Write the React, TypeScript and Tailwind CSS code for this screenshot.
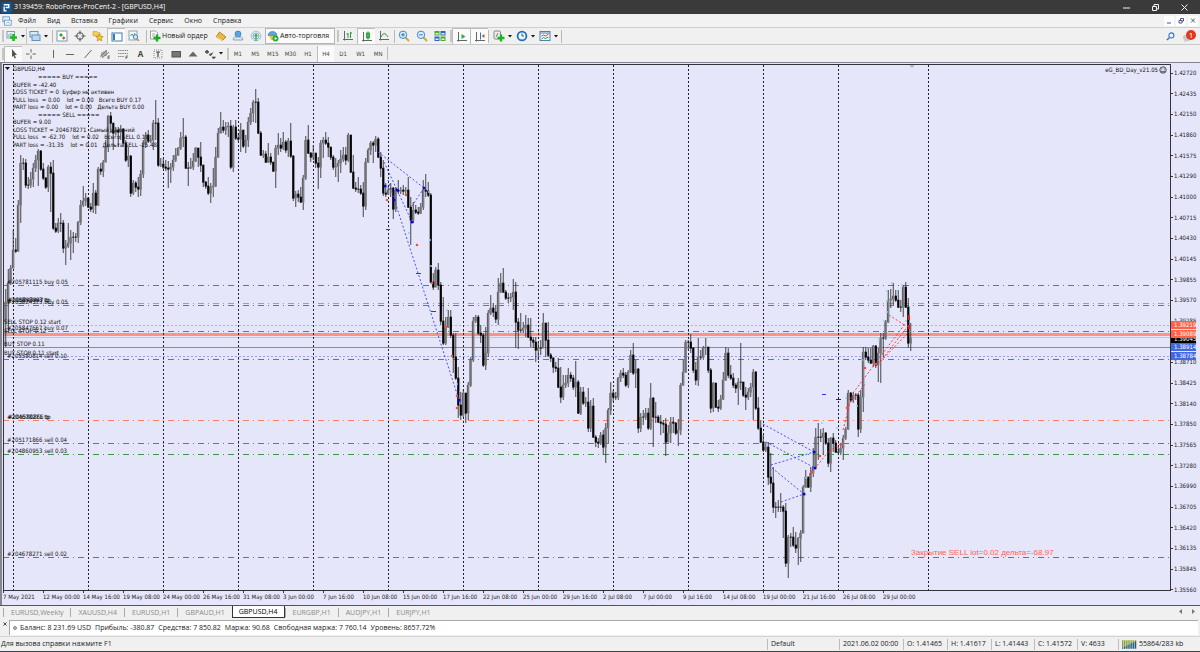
import type { ReactNode } from "react";
import clsx from "clsx";

const FIRST_X = 3;
const STEP = 2.5;

/* [close, high, low] for each H4 bar, in plot pixels */
const BARS = `322,318,345 302,289,347 283,269,330 268,265,285 250,230,267 251,238,253 205,200,252 163,155,223 163,158,170 185,159,188
185,177,189 179,172,188 168,163,187 160,155,172 151,149,186 169,150,171 178,163,180 187,177,189 167,165,192 173,162,212
228,160,230 231,223,233 223,218,233 223,213,232 248,220,253 246,240,265 243,223,248 237,230,260 237,232,253 237,233,242
222,221,243 205,200,225 201,186,207 198,193,206 207,197,208 209,203,212 193,183,213 205,190,214 169,167,206 171,163,175
162,160,177 147,140,162 116,115,152 123,112,133 133,130,150 130,127,135 132,127,147 129,125,140 143,128,147 160,140,162
156,147,167 193,155,197 183,180,195 187,181,192 189,177,197 174,170,196 143,140,178 135,132,148 141,130,143 140,135,143
123,120,150 123,100,140 165,118,167 164,158,167 167,158,169 168,160,171 169,161,188 167,163,183 160,155,171 155,148,162
148,147,156 138,132,150 137,118,147 168,135,169 168,162,186 167,158,169 161,153,170 148,147,162 157,148,167 165,142,172
182,165,187 186,181,189 193,177,195 187,183,203 186,168,197 157,147,187 133,128,158 127,112,133 130,120,133 127,122,135
126,122,137 167,120,169 127,125,172 138,120,140 139,133,142 130,123,152 146,130,148 140,135,153 122,117,147 113,108,125
102,100,122 102,89,123 133,98,134 155,131,156 154,150,158 162,151,163 157,143,163 162,153,165 171,163,172 148,145,188
145,133,155 148,138,152 142,132,150 150,140,153 141,138,157 156,123,158 198,155,201 194,191,207 197,190,202 202,187,203
178,175,210 140,136,180 153,125,154 157,152,162 153,145,160 163,153,168 167,157,189 143,140,178 140,137,158 143,132,145
147,137,157 157,147,160 167,155,170 166,158,177 163,160,182 159,150,173 155,147,162 160,147,165 135,133,162 172,135,173
188,155,189 189,182,192 189,177,193 193,185,195 206,182,217 162,158,210 150,148,163 143,141,155 145,141,163 139,136,152
157,137,158 168,152,177 193,160,196 194,183,197 190,185,195 188,183,197 209,187,219 190,187,212 191,180,194 190,187,194
191,185,195 190,187,195 207,177,208 220,197,245 210,202,223 212,205,214 213,207,215 207,203,214 190,180,210 191,174,197
195,182,197 282,193,283 287,273,290 270,267,287 285,263,290 321,282,325 343,297,345 327,317,345 317,310,328 335,310,338
357,333,373 378,333,380 405,367,418 415,392,420 393,390,417 413,393,423 385,382,420 360,357,387 321,317,362 317,315,323
333,315,335 335,325,343 365,333,367 353,327,370 313,310,357 308,295,315 312,303,317 319,305,323 292,278,325 283,273,293
292,268,293 298,290,300 298,293,303 297,293,302 292,279,310 322,282,348 330,318,349 330,313,333 328,322,333 325,315,337
337,318,338 340,318,347 342,337,348 350,337,362 348,342,360 348,340,355 323,313,348 340,323,357 355,322,357 358,353,362
367,357,373 368,362,372 387,358,388 397,367,403 385,375,400 383,375,388 375,368,387 378,372,382 387,375,390 382,361,397
413,380,414 392,387,415 403,387,405 402,397,407 428,388,432 406,400,432 437,398,438 442,435,447 443,438,448 435,432,445
447,430,455 428,423,463 410,408,443 393,382,415 397,390,402 397,392,400 378,377,400 373,370,382 375,368,378 385,372,387
372,370,388 355,350,373 373,343,375 369,360,388 428,368,433 417,413,432 417,410,425 413,408,420 428,408,430 398,383,430
417,397,447 417,402,423 422,415,423 423,415,435 424,420,433 442,418,456 433,425,442 422,417,443 423,417,433 433,422,435
430,419,446 385,383,435 372,360,386 342,340,373 342,340,350 348,334,353 370,347,373 380,362,385 357,338,386 357,350,360
348,346,359 347,338,355 370,347,373 408,368,413 383,382,412 407,383,408 408,400,412 399,395,410 380,372,400 353,347,381
375,348,378 378,365,380 385,373,388 388,383,393 382,378,405 382,343,390 395,382,397 397,387,410 392,388,400 387,383,397
372,369,420 408,371,410 428,397,430 442,420,443 450,435,452 447,442,452 477,442,485 483,453,493 507,467,513 507,502,518
507,500,512 507,493,512 511,505,538 563,503,567 537,535,578 537,533,547 545,527,547 548,532,553 538,537,565 533,530,562
487,485,533 477,470,488 487,477,488 473,467,492 467,448,477 437,428,468 437,423,460 437,429,442 433,428,455 443,432,445
463,438,467 438,437,472 443,433,452 452,440,453 452,447,455 448,443,455 438,435,460 429,427,440 393,390,430 400,392,402
395,392,403 395,393,400 429,393,437 397,390,433 352,347,412 357,347,360 360,348,363 363,348,364 346,345,367 365,345,368
353,348,382 338,333,383 338,333,357 322,320,340 300,290,323 299,289,308 296,283,305 300,290,302 307,290,308 307,300,312
287,285,317 307,282,308 343,298,348 338,323,351`
  .split(/\s+/)
  .map((bar) => bar.split(",").map(Number));

const DAY_LINES = [13, 88, 163, 238, 313, 388, 463, 538, 613, 688, 763, 838, 928];

const GREEN = "#3f9549";
const ORANGE = "#ff7f5a";
const BLUE = "#3c3cff";

const LEVELS: { y: number; color: string; dash?: string; width?: number }[] = [
  { y: 285, color: GREEN, dash: "6 4 1 4" },
  { y: 303, color: ORANGE, dash: "6 4 1 4" },
  { y: 305, color: GREEN, dash: "6 4 1 4" },
  { y: 325, color: "#ff9d8c", dash: "2 2" },
  { y: 331, color: GREEN, dash: "6 4 1 4" },
  { y: 334, color: "#fa9484", width: 3 },
  { y: 337, color: "#c0c5cd" },
  { y: 347, color: "#7088e6" },
  { y: 356, color: "#90a2f0", dash: "2 2" },
  { y: 359, color: GREEN, dash: "6 4 1 4" },
  { y: 420, color: ORANGE, dash: "6 4 1 4" },
  { y: 443, color: GREEN, dash: "6 4 1 4" },
  { y: 454, color: GREEN, dash: "6 4 1 4" },
  { y: 557, color: GREEN, dash: "6 4 1 4" },
];

const ORDER_LABELS: [number, number, string][] = [
  [7, 284, "#205781115 buy 0.05"],
  [7, 302, "#205858063 tp"],
  [8, 302, "#205843447 tp"],
  [7, 304, "#205824373 buy 0.05"],
  [4, 324, "SELL STOP 0.12 start"],
  [7, 330, "#205847667 buy 0.07"],
  [4, 333, "SELL STOP 0.12"],
  [4, 346, "BUY STOP 0.11"],
  [4, 355, "BUY STOP 0.11 start"],
  [7, 358, "#205580814 sell 0.10"],
  [7, 419, "#204678271 tp"],
  [8, 419, "#205580866 tp"],
  [7, 442, "#205171866 sell 0.04"],
  [7, 453, "#204860953 sell 0.03"],
  [7, 556, "#204678271 sell 0.02"],
];

const COMMENT: [number, string][] = [
  [38, "===== BUY ====="],
  [13, "BUFER = -42.40"],
  [13, "LOSS TICKET = 0\u00a0 Буфер не активен"],
  [13, "FULL loss\u00a0 = 0.00\u00a0\u00a0\u00a0 lot = 0.00\u00a0\u00a0 Всего BUY 0.17"],
  [13, "PART loss = 0.00\u00a0\u00a0\u00a0 lot = 0.00\u00a0\u00a0 Дельта BUY 0.00"],
  [38, "===== SELL ====="],
  [13, "BUFER = 9.00"],
  [13, "LOSS TICKET = 204678271\u00a0 Самый дальний"],
  [13, "FULL loss\u00a0 = -62.70\u00a0\u00a0\u00a0 lot = 0.02\u00a0\u00a0 Всего SELL 0.19"],
  [13, "PART loss = -31.35\u00a0\u00a0\u00a0 lot = 0.01\u00a0\u00a0 Дельта SELL -25.48"],
];

const BLUE_TRADES = [
  [378, 152, 424, 188], [384, 162, 412, 222], [424, 188, 412, 206], [388, 180, 459, 400],
  [763, 424, 814, 452], [766, 442, 815, 468], [771, 465, 814, 452], [772, 468, 804, 494], [781, 502, 804, 494],
];
const RED_TRADES = [
  [807, 478, 829, 451], [829, 451, 842, 443], [846, 408, 866, 383], [853, 393, 905, 324],
  [880, 362, 908, 326], [878, 364, 909, 332], [889, 315, 906, 326], [843, 430, 852, 395],
];
const BLUE_DOTS = [[424, 188], [412, 222], [394, 200], [459, 400], [814, 452], [815, 468], [804, 494], [397, 190], [385, 186]];
const RED_DOTS = [[387, 200], [417, 245], [406, 195], [432, 283], [446, 327], [452, 356], [457, 408], [457, 396], [820, 456], [847, 408], [865, 368], [876, 364], [812, 472], [842, 444]];
const CYAN_DOTS = [[409, 233], [430, 240], [431, 266], [447, 310], [429, 192], [457, 384], [822, 423], [837, 428], [813, 452], [846, 398], [857, 406], [862, 360], [879, 340], [884, 321], [887, 291], [887, 301], [892, 283], [897, 291], [902, 285], [906, 321], [806, 478], [887, 312]];

const PRICES = ["1.42720", "1.42435", "1.42150", "1.41860", "1.41575", "1.41290", "1.41000", "1.40715", "1.40430", "1.40145", "1.39855", "1.39570", "1.39285", "1.38995", "1.38710", "1.38425", "1.38140", "1.37850", "1.37565", "1.37280", "1.36990", "1.36705", "1.36420", "1.36135", "1.35845", "1.35560"];

const TIMES = ["7 May 2021", "12 May 00:00", "14 May 16:00", "19 May 08:00", "24 May 00:00", "26 May 16:00", "31 May 08:00", "3 Jun 00:00", "7 Jun 16:00", "10 Jun 08:00", "15 Jun 00:00", "17 Jun 16:00", "22 Jun 08:00", "25 Jun 00:00", "29 Jun 16:00", "2 Jul 08:00", "7 Jul 00:00", "9 Jul 16:00", "14 Jul 08:00", "19 Jul 00:00", "21 Jul 16:00", "26 Jul 08:00", "29 Jul 00:00"];

function Candles() {
  return (
    <g>
      {BARS.map(([close, high, low], i) => {
        const open = i === 0 ? 345 : BARS[i - 1][0];
        const x = FIRST_X + i * STEP;
        const up = close < open;
        return (
          <g key={i}>
            <line x1={x + 0.25} x2={x + 0.25} y1={high} y2={low} stroke="#333338" strokeWidth={0.9} />
            <rect x={x - 0.8} y={Math.min(open, close) - 0.3} width={2.2} height={Math.abs(open - close) + 0.9} fill={up ? "#808086" : "#050505"} />
            {up && <line x1={x - 0.7} x2={x - 0.7} y1={close} y2={open} stroke="#222" strokeWidth={0.5} />}
          </g>
        );
      })}
    </g>
  );
}

function Chart() {
  return (
    <svg className="block h-full w-full" role="img" aria-label="GBPUSD, H4">
      {/* plot coordinates start at the outer frame's corner */}
      <svg x={-4} y={-65} width="101%" height="115%" overflow="visible" fontSize={6}>
        {LEVELS.map((l) => (
          <line key={l.y} x1={3} x2="100%" y1={l.y + 0.5} y2={l.y + 0.5} stroke={l.color} strokeWidth={l.width ?? 1} strokeDasharray={l.dash} />
        ))}
        {DAY_LINES.map((x) => (
          <line key={x} x1={x + 0.5} x2={x + 0.5} y1={65} y2="100%" stroke="#222" strokeDasharray="2 2" />
        ))}
        <Candles />
        <g fill="none" strokeDasharray="2 2" strokeWidth={0.9}>
          {BLUE_TRADES.map(([a, b, c, d], i) => <line key={i} x1={a} y1={b} x2={c} y2={d} stroke={BLUE} />)}
          {RED_TRADES.map(([a, b, c, d], i) => <line key={i} x1={a} y1={b} x2={c} y2={d} stroke="#f23" />)}
        </g>
        {CYAN_DOTS.map(([x, y], i) => <circle key={i} cx={x} cy={y} r={1} fill="#86d6e8" />)}
        {RED_DOTS.map(([x, y], i) => <circle key={i} cx={x} cy={y} r={1.3} fill="#f0503c" />)}
        {BLUE_DOTS.map(([x, y], i) => <rect key={i} x={x - 1.2} y={y - 1.2} width={2.6} height={2.6} fill="#0505d8" />)}
        <path d="M909 315v5M909 325v4" stroke="#f21818" strokeWidth={2} />
        <path d="M386 229.5h4M416 273.5h5M431 311.5h5M822 394.5h4" stroke="#3030e0" />
        <path d="M836 399.5h5" stroke="#222288" />

        <path d="M5 67h5l-2.5 3z" fill="#111" />
        <g fill="#111">
          <text x={13} y={71}>GBPUSD,H4</text>
          {COMMENT.map(([x, line], i) => <text key={i} x={x} y={79 + i * 7.5}>{line}</text>)}
          {ORDER_LABELS.map(([x, y, label], i) => <text key={i} x={x} y={y}>{label}</text>)}
        </g>
        <text x={911} y={555} fontSize={8} fill="#ff6352" fontFamily="Liberation Sans, sans-serif">Закрытие SELL lot=0.02 дельта=-68.97</text>
        <path d="M909 65h6l-3 3z" fill="#b5b5c2" />
      </svg>
      <svg x="100%" overflow="visible" fontSize={6}>
        <text x={-12} y={7} textAnchor="end" fill="#111">eG_BD_Day_v21.05</text>
        <g fill="none" stroke="#222" strokeWidth={0.8}>
          <circle cx={-7} cy={5} r={3.2} />
          <path d="M-9 6q2 2 4 0M-8.200 3.500v1M-5.800 3.500v1" />
        </g>
      </svg>
    </svg>
  );
}

function Tag({ className, children }: { className: string; children: ReactNode }) {
  return <span className={clsx("absolute left-0 flex h-[8px] w-[25px] items-center pl-[3px] text-white", className)}>{children}</span>;
}

function PriceAxis() {
  return (
    <div className="relative w-[30px] shrink-0 border-l border-[#33333b] pt-[4px]">
      <ol className="flex h-[calc(100%+4px)] flex-col justify-between leading-[10px]">
        {PRICES.map((p) => (
          <li key={p} className="flex h-[10px] items-center gap-px">
            <i className="h-px w-[2px] bg-[#33333b]" />
            {p}
          </li>
        ))}
      </ol>
      <Tag className="top-[271px] bg-black">1.39045</Tag>
      <Tag className="top-[257px] bg-[#ff6347]">1.39219</Tag>
      <Tag className="top-[266px] bg-[#ff6347]">1.39089</Tag>
      <Tag className="top-[279px] bg-[#4169e1]">1.38914</Tag>
      <Tag className="top-[288px] bg-[#4169e1]">1.38784</Tag>
    </div>
  );
}

/* ---------- toolbar icons, drawn on a 12x12 grid ---------- */

const ICONS: Record<string, ReactNode> = {
  newChart: <><rect x="1" y="1.5" width="7.5" height="6.5" fill="#e9f3fb" stroke="#7da2bd" /><path d="M3 4v3M5 3v3" stroke="#7da2bd" /><path d="M7.5 4v7M4 7.5h7" stroke="#1fb92a" strokeWidth="2.6" /></>,
  profiles: <><rect x="1" y="1.5" width="8" height="5.5" fill="#dcebf8" stroke="#6490b8" /><rect x="3" y="5" width="8" height="5.5" fill="#bcd6ee" stroke="#6490b8" /></>,
  market: <><rect x="1" y="1" width="10" height="10" fill="#fff" stroke="#6f9ac0" /><path d="M3 5l2-2 2 2-2 2z" fill="#27ae3a" /><path d="M6 8l1.7-1.7L9.5 8 7.700 9.700z" fill="#e04a2f" /></>,
  target: <g fill="none" stroke="#555"><circle cx="6" cy="6" r="3.4" /><path d="M6 .5v4M6 7.500v4M.5 6h4M7.500 6h4" /></g>,
  folder: <><path d="M1 1.500h4l1 1.300h2v3H1z" fill="#f2cc55" stroke="#c99a28" strokeWidth=".6" /><path d="M7.500 4l1.100 2.300 2.600.3-1.900 1.800.5 2.500-2.300-1.200L5.200 11l.4-2.600-1.800-1.800 2.600-.3z" fill="#f5c431" stroke="#a97a12" strokeWidth=".6" /></>,
  panel: <><rect x="1" y="2" width="10" height="8" fill="#fff" stroke="#3f78b8" /><path d="M3 3v6" stroke="#3f78b8" strokeWidth="2" /></>,
  tester: <><rect x="1" y="1" width="8" height="9" fill="#f4f7fa" stroke="#8fa7b8" /><path d="M2.500 6l1.500-2 1.500 2L7 3" stroke="#5d86a8" fill="none" /><circle cx="7.500" cy="7" r="2.200" fill="#d4eafc" stroke="#4a84b8" /><path d="M9 8.700l2 2.300" stroke="#c9972f" strokeWidth="1.400" /></>,
  order: <><path d="M1.500 1h5l2 2v6h-7z" fill="#fff" stroke="#8b8b8b" strokeWidth=".8" /><path d="M3 4h3M3 6h3" stroke="#888" strokeWidth=".7" /><path d="M8 4.500v7M4.500 8h7" stroke="#19ab26" strokeWidth="2.400" /></>,
  gold: <><path d="M1 7l3.500-5L11 7 7.500 10.500z" fill="#eab93a" stroke="#a8741a" strokeWidth=".8" /><path d="M1 7l6.500 3.500" stroke="#fff0b0" strokeWidth=".8" /></>,
  cloud: <><circle cx="6" cy="4" r="3" fill="#58a5e4" stroke="#3478bb" strokeWidth=".7" /><path d="M1.500 10a2 2 0 0 1 2-3h5a2 2 0 0 1 2 3z" fill="#dce8f3" stroke="#7392b3" strokeWidth=".8" /></>,
  signal: <><circle cx="6" cy="6" r="4.800" fill="none" stroke="#9ec0dd" /><circle cx="6" cy="6" r="3" fill="none" stroke="#7aaed0" /><circle cx="6" cy="5.500" r="1.600" fill="#3fae49" /><path d="M6 6v5" stroke="#3fae49" strokeWidth="1.300" /></>,
  auto: <><path d="M1 5.500a4.500 4 0 0 1 9 0z" fill="#5aa6dd" stroke="#3573a8" strokeWidth=".6" /><path d="M2 6h7l-2 4H4z" fill="#f0c348" /><circle cx="8.500" cy="8.500" r="3" fill="#25ae32" /><path d="M7.700 7l2.500 1.500-2.500 1.500z" fill="#fff" /></>,
  bars: <><path d="M2.500 1v9.500M1 9.500h10" stroke="#666" /><path d="M6 3v5M6 4h-1.500M8.500 2v6M8.500 3h1.500" stroke="#2b9a35" /></>,
  candle: <><path d="M2.500 1v9.500M1 9.500h10" stroke="#666" /><path d="M7 .5v8" stroke="#1a8a28" /><rect x="5.300" y="2" width="3.400" height="5" fill="#2fc23f" stroke="#1a8a28" strokeWidth=".6" /></>,
  line: <><path d="M2.500 1v9.500M1 9.500h10" stroke="#666" /><path d="M3 7q3-7 7 0" fill="none" stroke="#2b9a35" /></>,
  zoomIn: <><path d="M7.500 7.500l3.500 3.500" stroke="#d9a532" strokeWidth="2" /><circle cx="5" cy="4.800" r="3.700" fill="#d8edfc" stroke="#3d8ad0" /><path d="M5 3v3.600M3.200 4.800h3.600" stroke="#2c76bc" /></>,
  zoomOut: <><path d="M7.500 7.500l3.500 3.500" stroke="#d9a532" strokeWidth="2" /><circle cx="5" cy="4.800" r="3.700" fill="#d8edfc" stroke="#3d8ad0" /><path d="M3.200 4.800h3.600" stroke="#2c76bc" /></>,
  tile: <><path d="M.5 1h5v4.500h-5zM6.500 6.500h5V11h-5z" fill="#48ac35" /><path d="M6.500 1h5v4.500h-5zM.5 6.500h5V11h-5z" fill="#2f66bb" /><path d="M1.500 3h3v1.500h-3zM7.500 3h3v1.500h-3zM1.500 8.500h3V10h-3zM7.500 8.500h3V10h-3z" fill="#e9f2e4" /></>,
  scroll: <><path d="M2.500 1v9.500M1 9.500h10" stroke="#666" /><path d="M5.500 3l4 2.500-4 2.500z" fill="#2bb037" /></>,
  shift: <><path d="M2.500 1v9.500M1 9.500h10" stroke="#666" /><path d="M6.500 1.500v7" stroke="#2b78bb" /><path d="M10.500 3L7.500 5l3 2z" fill="#d2542c" /></>,
  indicator: <><rect x="1" y="1" width="6.500" height="8" rx="1" fill="#eee" stroke="#888" /><path d="M3 7l2-4" stroke="#777" /><path d="M8 4.500v7M4.500 8h7" stroke="#19b426" strokeWidth="2.400" /></>,
  clock: <><circle cx="6" cy="6" r="4.400" fill="#eef6fd" stroke="#2271c4" strokeWidth="1.800" /><path d="M6 3.500V6h2" fill="none" stroke="#555" /></>,
  template: <><rect x="1" y="1.500" width="10" height="9" fill="#eef5fb" stroke="#4e84b4" /><path d="M1 3h10" stroke="#4e84b4" /><path d="M2.500 6l2-1 2 1 3-2" fill="none" stroke="#cf4e32" /><path d="M2.500 9l2-1.500 2 1 3-1.500" fill="none" stroke="#3d9c40" /></>,
  pointer: <path d="M4 1l5 6H6.700l1.300 3-1.300.6L5.400 7.700 4 9z" fill="#555" />,
  cross: <path d="M6 1v3.500M6 7.500V11M1 6h3.500M7.500 6H11" stroke="#666" />,
  vline: <path d="M6.500 2v8" stroke="#666" />,
  hline: <path d="M2 6.500h8" stroke="#666" />,
  trend: <path d="M2.500 10l7-8" stroke="#666" />,
  channel: <path d="M1 8.500l7-6M3 10l7-6M3 4v5M5 3v5M7 2v6M9 8h2M9 10h2M9 8v3" stroke="#666" strokeWidth=".9" />,
  fibo: <><path d="M1 2.500h10M1 5.500h10M1 8.500h6" stroke="#888" strokeDasharray="1.500 .7" /><path d="M9 11V8h2M9 9.500h1.500" fill="none" stroke="#555" strokeWidth=".8" /></>,
  label: <><rect x="2" y="2" width="8" height="8" fill="none" stroke="#888" strokeDasharray="1 1" /><path d="M4 4h4M6 4v5" stroke="#444" strokeWidth="1.200" /></>,
  rect: <rect x="2" y="3.500" width="8.500" height="5.500" fill="#777" stroke="#555" />,
  triangle: <path d="M1.500 8.500L6 3.500l4.500 5z" fill="#666" />,
  arrows: <path d="M1 4l2-2 2 2-2 1.500zM5 6l1.500 2L9 4.500M8 9l1.500 2L11.500 9z" fill="#555" stroke="#555" strokeWidth=".8" />,
};

function Icon({ name }: { name: string }) {
  return <svg viewBox="0 0 12 12" className="size-3 shrink-0" aria-hidden="true">{ICONS[name]}</svg>;
}

function Tool({ name, label, active, className }: { name: string; label: string; active?: boolean; className?: string }) {
  return (
    <button
      type="button"
      aria-label={label}
      className={clsx("flex h-[16px] items-center justify-center", active && "border-l border-t border-[#bdbdbd] bg-[#fafafa]", className)}
    >
      <Icon name={name} />
    </button>
  );
}

function DropTool({ name, label, boxed }: { name: string; label: string; boxed?: boolean }) {
  return (
    <button type="button" aria-label={label} className={clsx("flex h-[16px] w-[23px] items-center justify-center gap-[3px]", boxed && "border-r border-[#c4c4c4]")}>
      <Icon name={name} />
      <Caret />
    </button>
  );
}

const Caret = () => <svg viewBox="0 0 4 3" className="h-[3px] w-[4px] shrink-0" aria-hidden="true"><path d="M0 0h4L2 2.500z" fill="#111" /></svg>;
const Sep = () => <span className="h-[13px] w-px shrink-0 bg-[#b9b9b9]" />;
const Grip = () => <span className="h-[12px] w-[2px] shrink-0 border-x border-[#c6c6c6]" />;

function MainToolbar() {
  return (
    <div role="toolbar" aria-label="Стандартная" className="flex h-[17px] items-center border-b border-[#c9c9c9] pl-[2px]">
      <Grip />
      <DropTool name="newChart" label="Новый график" boxed />
      <DropTool name="profiles" label="Профили" />
      <span className="pl-[2px]" />
      <Sep />
      <div className="grid w-[90px] grid-cols-5">
        <Tool name="market" label="Обзор рынка" />
        <Tool name="target" label="Окно данных" />
        <Tool name="folder" label="Навигатор" />
        <Tool name="panel" label="Терминал" active />
        <Tool name="tester" label="Тестер стратегий" />
      </div>
      <span className="pl-[3px]" />
      <Sep />
      <button type="button" className="flex h-[16px] w-[65px] items-center gap-px pl-[2px] whitespace-nowrap">
        <Icon name="order" />
        Новый ордер
      </button>
      <div className="grid w-[53px] grid-cols-3">
        <Tool name="gold" label="MetaEditor" />
        <Tool name="cloud" label="VPS" />
        <Tool name="signal" label="Сигналы" />
      </div>
      <button type="button" className="flex h-[16px] w-[70px] items-center gap-px border border-[#b5b5b5] bg-[#fbfbfb] pl-[1px] whitespace-nowrap">
        <Icon name="auto" />
        Авто-торговля
      </button>
      <span className="pl-[2px]" />
      <Grip />
      <div className="grid w-[54px] grid-cols-3">
        <Tool name="bars" label="Бары" />
        <Tool name="candle" label="Свечи" active />
        <Tool name="line" label="Линия" />
      </div>
      <span className="pl-px" />
      <Sep />
      <div className="grid w-[54px] grid-cols-3">
        <Tool name="zoomIn" label="Увеличить" />
        <Tool name="zoomOut" label="Уменьшить" />
        <Tool name="tile" label="Окна мозаикой" />
      </div>
      <span className="pl-px" />
      <Grip />
      <div className="grid w-[36px] grid-cols-2">
        <Tool name="scroll" label="Автопрокрутка" active />
        <Tool name="shift" label="Сдвиг графика" active />
      </div>
      <Sep />
      <span className="pl-[2px]" />
      <DropTool name="indicator" label="Индикаторы" />
      <DropTool name="clock" label="Периоды" />
      <DropTool name="template" label="Шаблоны" />
      <span className="pl-px" />
      <Sep />
      <div className="ml-auto flex h-[16px] items-center gap-[8px] pr-[4px]">
        <button type="button" aria-label="Поиск">
          <svg viewBox="0 0 10 10" className="size-[9px]" aria-hidden="true"><circle cx="6" cy="3.800" r="2.800" fill="#e8f2fd" stroke="#3c6fd0" strokeWidth="1.200" /><path d="M4 6L1 9" stroke="#3c6fd0" strokeWidth="1.600" /></svg>
        </button>
        <button type="button" className="relative size-[13px]" aria-label="Уведомления: 1">
          <svg viewBox="0 0 13 13" className="size-[13px]" aria-hidden="true"><path d="M0 8.500a3 2.500 0 0 1 6-2l2 3a4 3 0 0 1-5 1.500L1 12.500 1.500 10z" fill="#c9c9c9" /></svg>
          <span className="absolute top-0 right-0 flex size-[10px] items-center justify-center rounded-full bg-[#dd3a22] text-[8px] leading-none text-white">1</span>
        </button>
      </div>
    </div>
  );
}

function DrawingToolbar() {
  return (
    <div role="toolbar" aria-label="Графические объекты" className="flex h-[17px] items-center pl-[2px] text-[#444]">
      <Grip />
      <div className="grid w-[36px] grid-cols-2">
        <Tool name="pointer" label="Курсор" active />
        <Tool name="cross" label="Перекрестие" />
      </div>
      <span className="pl-[4px]" />
      <div className="grid w-[158px] grid-cols-9">
        <Tool name="vline" label="Вертикальная линия" />
        <Tool name="hline" label="Горизонтальная линия" />
        <Tool name="trend" label="Трендовая линия" />
        <Tool name="channel" label="Канал" />
        <Tool name="fibo" label="Фибоначчи" />
        <button type="button" className="text-[8px] font-bold">A</button>
        <Tool name="label" label="Метка" />
        <Tool name="rect" label="Прямоугольник" />
        <Tool name="triangle" label="Треугольник" />
      </div>
      <DropTool name="arrows" label="Стрелки" />
      <span className="pl-[2px]" />
      <Grip />
      <div className="grid w-[158px] grid-cols-9 font-[DejaVu_Sans_Condensed,DejaVu_Sans,sans-serif] text-[6px]">
        {["M1", "M5", "M15", "M30", "H1", "H4", "D1", "W1", "MN"].map((p) => (
          <button key={p} type="button" className={clsx("h-[16px] text-center", p === "H4" && "border-l border-[#bdbdbd] bg-[#fafafa]")}>{p}</button>
        ))}
      </div>
      <Sep />
    </div>
  );
}

const MENUS = ["Файл", "Вид", "Вставка", "Графики", "Сервис", "Окно", "Справка"];
const TABS = ["EURUSD,Weekly", "XAUUSD,H4", "EURUSD,H1", "GBPAUD,H1", "GBPUSD,H4", "EURGBP,H1", "AUDJPY,H1", "EURJPY,H1"];
const ACCOUNT = ["Баланс: 8 231.69 USD", "Прибыль: -380.87", "Средства: 7 850.82", "Маржа: 90.68", "Свободная маржа: 7 760.14", "Уровень: 8657.72%"];

function StatusCell({ className, children }: { className: string; children: ReactNode }) {
  return <span className={clsx("flex h-[11px] items-center border-l border-[#bcbcbc] pl-[3px]", className)}>{children}</span>;
}

export default function App() {
  return (
    <div className="flex h-screen min-h-[600px] flex-col overflow-hidden bg-[#f0f0f0] font-[Open_Sans,Noto_Sans,sans-serif] text-[7px] leading-[10px] text-[#1a1a1a]">
      <header className="flex h-[14px] shrink-0 items-center bg-[#3a3a3a] text-white">
        <svg viewBox="0 0 12 12" className="ml-[1px] size-[11px]" aria-hidden="true"><rect width="12" height="12" rx="1.500" fill="#14538f" /><path d="M3 3h5.500v3H5M3.500 5v4.500H6" fill="none" stroke="#fff" strokeWidth="1.500" /></svg>
        <h1 className="ml-[2px] whitespace-nowrap">3139459: RoboForex-ProCent-2 - [GBPUSD,H4]</h1>
        <div className="ml-auto flex gap-[22px] pr-[12px]">
          {[["Свернуть", "M0 4h7"], ["Развернуть", "M.5 2.500h4v4h-4zM2 2.500V.5h4.500V5h-2"], ["Закрыть", "M.5.500l6 6M6.500.5l-6 6"]].map(([label, d]) => (
            <button key={label} type="button" aria-label={label}>
              <svg viewBox="0 0 7 7" className="size-[7px]" aria-hidden="true"><path d={d} fill="none" stroke="#f3f3f3" strokeWidth="1" /></svg>
            </button>
          ))}
        </div>
      </header>

      <div className="flex h-[14px] shrink-0 items-center border-b border-[#cfcfcf] bg-[#f2f2f2]">
        <svg viewBox="0 0 12 12" className="ml-[2px] size-[10px]" aria-hidden="true"><rect x="1" y="1" width="8" height="6" fill="#e3effa" stroke="#5e92c4" /><rect x="3" y="5" width="8" height="6" fill="#fff" stroke="#5e92c4" /><path d="M5 9l2-2 2 2" fill="none" stroke="#5e92c4" /></svg>
        <nav className="ml-[6px] flex gap-[11px]">
          {MENUS.map((m) => <a key={m} href="#">{m}</a>)}
        </nav>
        <div className="ml-auto flex gap-[2px] pr-[2px]">
          {[["Свернуть окно", "M1 6h4"], ["Восстановить окно", "M1 3.500h3V6H1zM2.500 3V1.500h3V4H4"], ["Закрыть окно", "M1 1.500l4 4M5 1.500l-4 4"]].map(([label, d]) => (
            <button key={label} type="button" aria-label={label} className="flex h-[10px] w-[10px] items-center justify-center bg-white">
              <svg viewBox="0 0 7 7" className="size-[7px]" aria-hidden="true"><path d={d} fill="none" stroke="#4a5b78" strokeWidth="1" /></svg>
            </button>
          ))}
        </div>
      </div>

      <div className="shrink-0">
        <MainToolbar />
        <DrawingToolbar />
      </div>

      <main className="flex min-h-0 flex-1 flex-col border-t border-l-2 border-[#85858f] bg-[#e6e6fa] pt-px pl-px font-[DejaVu_Sans_Condensed,DejaVu_Sans,sans-serif] text-[6px]">
        <div className="flex min-h-0 flex-1">
          <div className="min-w-0 flex-1 border-t border-b border-l border-[#33333b]"><Chart /></div>
          <PriceAxis />
        </div>
        <ol className="flex h-[14px] shrink-0 overflow-hidden leading-[8px]">
          {TIMES.map((t) => (
            <li key={t} className="w-[40px] shrink-0 whitespace-nowrap">
              <i className="block h-[2px] w-px bg-[#33333b]" />
              {t}
            </li>
          ))}
        </ol>
      </main>

      <div className="flex h-[14px] shrink-0 items-start border-t border-[#555]">
        <div role="tablist" className="flex h-[12px] items-center pl-[3px] text-[#8a8a8a]">
          {TABS.map((t) => {
            const active = t === "GBPUSD,H4";
            return (
              <button key={t} type="button" role="tab" aria-selected={active} className={clsx(active ? "h-[12px] border border-t-0 border-[#333] bg-white px-[6px] text-black" : "h-[9px] border-l border-[#aaa] px-[7px] leading-[9px]")}>
                {t}
              </button>
            );
          })}
        </div>
        <div className="ml-auto flex gap-[8px] pt-[3px] pr-[5px]">
          <button type="button" aria-label="Назад"><svg viewBox="0 0 4 5" className="h-[5px] w-[4px]" aria-hidden="true"><path d="M3 0v5L0 2.500z" fill="#777" /></svg></button>
          <button type="button" aria-label="Вперёд"><svg viewBox="0 0 4 5" className="h-[5px] w-[4px]" aria-hidden="true"><path d="M1 0v5l3-2.500z" fill="#777" /></svg></button>
        </div>
      </div>

      <div className="flex h-[18px] shrink-0 items-stretch border-b border-[#d4d4d4] pt-[1px] pb-[1px]">
        <button type="button" aria-label="Закрыть терминал" className="flex w-[9px] justify-center pt-[2px]">
          <svg viewBox="0 0 5 5" className="size-[4px]" aria-hidden="true"><path d="M.5.500l4 4M4.500.5l-4 4" stroke="#222" /></svg>
        </button>
        <div className="mr-[2px] flex flex-1 items-center border-t border-l border-[#a8a8a8] bg-white">
          <i className="mx-[3px] size-[4px] rounded-full border border-[#888] bg-[#bbb]" />
          <p className="flex gap-[4px] whitespace-nowrap">{ACCOUNT.map((a) => <span key={a}>{a}</span>)}</p>
        </div>
      </div>

      <footer className="flex h-[15px] shrink-0 items-center border-b border-[#2c4a55] whitespace-nowrap">
        <span className="flex-1 pl-[1px]">Для вызова справки нажмите F1</span>
        <StatusCell className="w-[72px]">Default</StatusCell>
        <StatusCell className="w-[64px]">2021.06.02 00:00</StatusCell>
        <StatusCell className="w-[44px]">O: 1.41465</StatusCell>
        <StatusCell className="w-[44px]">H: 1.41617</StatusCell>
        <StatusCell className="w-[43px]">L: 1.41443</StatusCell>
        <StatusCell className="w-[43px]">C: 1.41572</StatusCell>
        <StatusCell className="w-[41px]">V: 4633</StatusCell>
        <StatusCell className="w-[82px] gap-[2px]">
          <svg viewBox="0 0 16 9" className="h-[9px] w-[15px]" aria-hidden="true">
            {[0, 2, 4, 6, 8, 10, 12, 14].map((x, i) => <g key={x}><path d={`M${x + 0.5} 0v${8 - i}`} stroke="#8c9e3a" strokeWidth="1.400" /><path d={`M${x + 0.5} ${8 - i}V9`} stroke="#1c5a80" strokeWidth="1.400" /></g>)}
          </svg>
          55864/283 kb
        </StatusCell>
      </footer>
    </div>
  );
}
